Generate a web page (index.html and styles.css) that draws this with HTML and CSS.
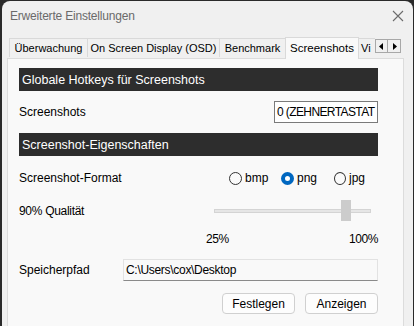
FILE: index.html
```html
<!DOCTYPE html>
<html lang="de">
<head>
    <meta charset="UTF-8">
    <title>Erweiterte Einstellungen</title>
    <link rel="stylesheet" href="styles.css">
</head>
<body>
<div class="win">
    <div class="titlebar">
        <span class="title">Erweiterte Einstellungen</span>
        <svg class="close" width="12" height="12" viewBox="0 0 12 12">
            <path d="M1 1L11 11M11 1L1 11" stroke="#6b6b6b" stroke-width="1.1" fill="none"/>
        </svg>
    </div>
    <div class="tabs">
        <div class="tab t1">Überwachung</div>
        <div class="tab t2">On Screen Display (OSD)</div>
        <div class="tab t3">Benchmark</div>
        <div class="tab on">Screenshots</div>
        <div class="tab cut">Vi</div>
        <div class="arrows">
            <span class="arr"><svg width="5" height="7" viewBox="0 0 5 7"><path d="M4 0L0 3.5L4 7Z" fill="#000"/></svg></span>
            <span class="arr"><svg width="5" height="7" viewBox="0 0 5 7"><path d="M1 0L5 3.5L1 7Z" fill="#000"/></svg></span>
        </div>
    </div>
    <div class="panel">
        <div class="head">Globale Hotkeys für Screenshots</div>
        <div class="row r-hotkey">
            <span>Screenshots</span>
            <div class="keybox">0 (ZEHNERTASTAT</div>
        </div>
        <div class="head">Screenshot-Eigenschaften</div>
        <div class="row r-format">
            <span>Screenshot-Format</span>
            <div class="radios">
                <label class="radio"><i class="dot"></i>bmp</label>
                <label class="radio"><i class="dot sel"></i>png</label>
                <label class="radio"><i class="dot"></i>jpg</label>
            </div>
        </div>
        <div class="row r-quality">
            <span class="tight">90% Qualität</span>
            <div class="slider">
                <div class="track"></div>
                <div class="thumb"></div>
            </div>
        </div>
        <div class="scale">
            <span>25%</span>
            <span>100%</span>
        </div>
        <div class="row r-path">
            <span>Speicherpfad</span>
            <div class="pathbox">C:\Users\cox\Desktop</div>
        </div>
        <div class="buttons">
            <button class="btn">Festlegen</button>
            <button class="btn">Anzeigen</button>
        </div>
    </div>
</div>
</body>
</html>
```

FILE: styles.css
```css
* {
    margin: 0;
    padding: 0;
    box-sizing: border-box;
}
body {
    background: #2a2a2a;
    width: 414px;
    height: 326px;
    overflow: hidden;
    font-family: "Liberation Sans", Arial, sans-serif;
    font-size: 12px;
    color: #000;
}
.win {
    margin: 1px 1px 0 2px;
    height: 325px;
    background: #f0f0f0;
    border-radius: 8px 8px 0 0;
}
.titlebar {
    height: 36px;
    display: flex;
    align-items: center;
    justify-content: space-between;
    padding: 0 9px 6px 8px;
}
.title {
    font-family: "Liberation Sans", sans-serif;
    font-size: 12px;
    letter-spacing: -0.2px;
    color: #6a6a6a;
}

/* Reiter */
.tabs {
    display: flex;
    align-items: flex-end;
    height: 21px;
    padding-left: 7px;
    font-size: 11px;
}
.tab {
    height: 19px;
    margin-bottom: 1px;
    border: 1px solid #d9d9d9;
    border-bottom: none;
    border-right: none;
    background: #f0f0f0;
    display: flex;
    align-items: center;
    justify-content: center;
    white-space: nowrap;
    overflow: hidden;
}
.t1 { width: 78px; }
.t2 { width: 132px; }
.t3 { width: 66px; }
.tab.on {
    width: 74px;
    height: 22px;
    margin-bottom: -1px;
    background: #f9f9f9;
    border-right: 1px solid #d9d9d9;
    position: relative;
    z-index: 1;
    padding-bottom: 2px;
    font-size: 11.5px;
}
.tab.cut {
    width: 16px;
    justify-content: flex-start;
    padding-left: 2px;
    border-left: none;
}
.arrows {
    display: flex;
    align-self: flex-start;
    margin-top: 2px;
}
.arr {
    width: 13px;
    height: 14px;
    border: 1px solid #a8a8a8;
    background: #f0f0f0;
    display: flex;
    align-items: center;
    justify-content: center;
}
.arr + .arr {
    border-left: none;
}

/* Inhalt */
.panel {
    margin-left: 5px;
    width: 397px;
    height: 270px;
    border: 1px solid #dcdcdc;
    border-bottom: none;
    background: #f9f9f9;
    padding: 9px 25px 0 11px;
}
.head {
    height: 23px;
    background: #2d2d2d;
    color: #fff;
    font-size: 12.5px;
    display: flex;
    align-items: center;
    padding-left: 3px;
}
.row {
    display: flex;
    align-items: center;
    justify-content: space-between;
}
.tight {
    letter-spacing: -0.3px;
}
.r-hotkey {
    height: 42px;
}
.keybox {
    width: 104px;
    height: 22px;
    border: 1px solid #7a7a7a;
    background: #fff;
    padding-left: 2px;
    line-height: 20px;
    letter-spacing: -0.6px;
    white-space: nowrap;
    overflow: hidden;
}
.r-format {
    height: 44px;
}
.radios {
    display: flex;
    margin-right: 13px;
}
.radio {
    display: flex;
    align-items: center;
    width: 52px;
}
.radio:nth-child(2) {
    width: 53px;
}
.radio:last-child {
    width: 31px;
}
.dot {
    width: 13px;
    height: 13px;
    border-radius: 50%;
    border: 1px solid #333;
    background: #fafafa;
    margin-right: 3px;
}
.dot.sel {
    border: 4px solid #0067c0;
    background: #fff;
}
.r-quality {
    height: 22px;
}
.slider {
    position: relative;
    width: 157px;
    height: 22px;
    margin-right: 7px;
}
.track {
    position: absolute;
    left: 0;
    right: 0;
    top: 9px;
    height: 4px;
    background: #e6e6e6;
    border: 1px solid #d4d4d4;
}
.thumb {
    position: absolute;
    left: 127px;
    top: 0;
    width: 10px;
    height: 21px;
    background: #cccccc;
}
.scale {
    display: flex;
    justify-content: space-between;
    padding-left: 187px;
    height: 34px;
    align-items: center;
    letter-spacing: -0.4px;
}
.r-path {
    height: 22px;
    margin-top: 3px;
}
.pathbox {
    width: 255px;
    height: 22px;
    border: 1px solid #e2e2e2;
    border-bottom-color: #8a8a8a;
    background: #f9f9f9;
    padding-left: 2px;
    line-height: 20px;
    letter-spacing: -0.3px;
}
.buttons {
    display: flex;
    justify-content: flex-end;
    gap: 10px;
    margin-top: 12px;
}
.btn {
    width: 73px;
    height: 21px;
    border: 1px solid #d0d0d0;
    border-radius: 4px;
    background: #fdfdfd;
    font: inherit;
    color: #000;
}
```
